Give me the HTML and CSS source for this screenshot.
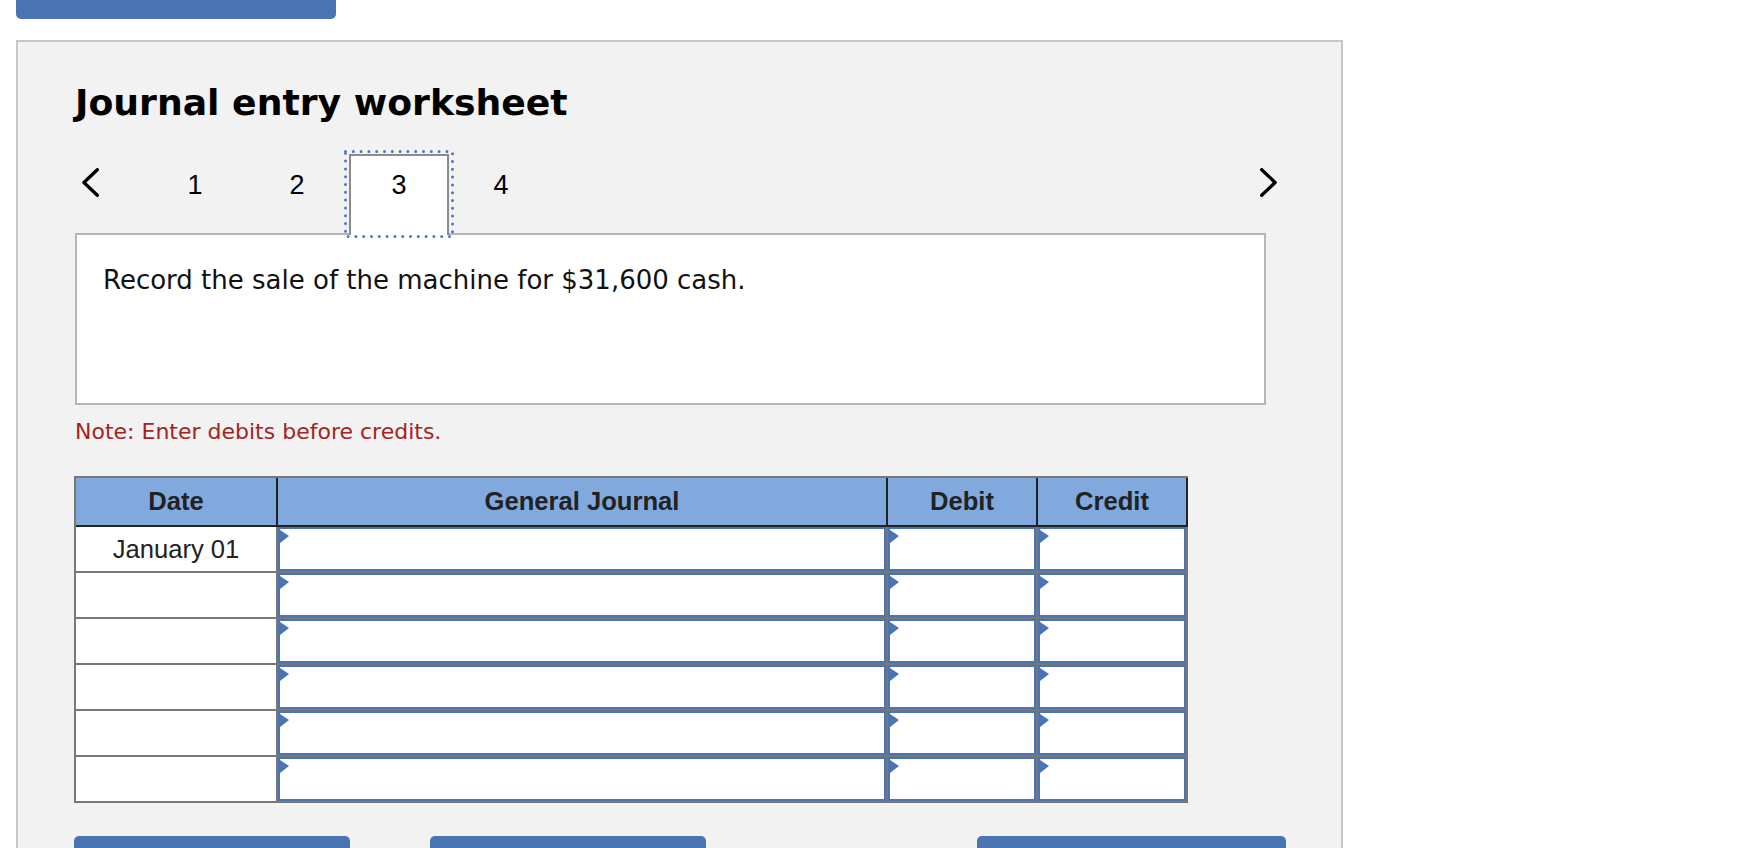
FILE: index.html
```html
<!DOCTYPE html>
<html lang="en">
<head>
<meta charset="utf-8">
<title>Journal entry worksheet</title>
<link rel="stylesheet" href="styles.css">
</head>
<body>
<div class="top-btn"></div>
<div class="panel">
  <h1 class="title">Journal entry worksheet</h1>
  <div class="nav">
    <svg class="chev" width="17" height="29" viewBox="0 0 17 29"><polyline points="15.3,1.7 1.9,14.5 15.3,27.3" fill="none" stroke="#000" stroke-width="3.3" stroke-linecap="round" stroke-linejoin="round"/></svg>
    <div class="steps">
      <div class="step">1</div>
      <div class="step">2</div>
      <div class="step active">3
        <svg class="focus-ring" width="110" height="88" viewBox="0 0 110 88"><rect x="1.5" y="1.5" width="107" height="85" fill="none" stroke="#4a78c4" stroke-width="3" stroke-linecap="round" stroke-dasharray="0 7.8"/></svg>
      </div>
      <div class="step">4</div>
    </div>
    <svg class="chev chev-right" width="17" height="29" viewBox="0 0 17 29"><polyline points="1.7,1.7 15.1,14.5 1.7,27.3" fill="none" stroke="#000" stroke-width="3.3" stroke-linecap="round" stroke-linejoin="round"/></svg>
  </div>
  <div class="prompt">Record the sale of the machine for $31,600 cash.</div>
  <p class="note">Note: Enter debits before credits.</p>
  <div class="journal">
    <div class="jhead">
      <div class="hcell">Date</div>
      <div class="hcell">General Journal</div>
      <div class="hcell">Debit</div>
      <div class="hcell">Credit</div>
    </div>
    <div class="jbody">
      <div class="dcell">January 01</div><div class="entry"></div><div class="entry"></div><div class="entry"></div>
      <div class="dcell"></div><div class="entry"></div><div class="entry"></div><div class="entry"></div>
      <div class="dcell"></div><div class="entry"></div><div class="entry"></div><div class="entry"></div>
      <div class="dcell"></div><div class="entry"></div><div class="entry"></div><div class="entry"></div>
      <div class="dcell"></div><div class="entry"></div><div class="entry"></div><div class="entry"></div>
      <div class="dcell"></div><div class="entry"></div><div class="entry"></div><div class="entry"></div>
    </div>
  </div>
  <div class="buttons">
    <div class="btn btn-1"></div>
    <div class="btn btn-2"></div>
    <div class="btn btn-3"></div>
  </div>
</div>
</body>
</html>
```

FILE: styles.css
```css
html, body {
  margin: 0;
  padding: 0;
  height: 100%;
  overflow: hidden;
  background: #ffffff;
}

body {
  font-family: "DejaVu Sans", Verdana, sans-serif;
  color: #000;
}

.top-btn {
  margin-left: 16px;
  width: 320px;
  height: 19px;
  background: #4a74b2;
  border-radius: 0 0 5px 5px;
}

.panel {
  margin-top: 21px;
  margin-left: 16px;
  width: 1327px;
  height: 808px;
  box-sizing: border-box;
  border: 2px solid #c6c6c6;
  border-bottom: 0;
  background: #f2f2f2;
  padding-top: 39px;
  overflow: hidden;
}

.title {
  margin: 0 0 0 57px;
  font-family: "DejaVu Sans", Verdana, sans-serif;
  font-weight: bold;
  font-size: 36.2px;
  line-height: 44px;
  color: #000;
}

.nav {
  margin-top: 29px;
  margin-left: 64px;
  width: 1195px;
  height: 79px;
  display: flex;
  align-items: flex-start;
}

.chev {
  margin-top: 14px;
  flex: none;
}

.chev-right {
  margin-left: auto;
}

.steps {
  margin-left: 46px;
  display: flex;
  gap: 2px;
  align-items: flex-start;
}

.step {
  width: 100px;
  height: 79px;
  box-sizing: border-box;
  border: 2px solid transparent;
  border-bottom: 0;
  padding-top: 14px;
  text-align: center;
  font-family: "Liberation Sans", Arial, sans-serif;
  font-size: 27px;
  line-height: 30px;
  color: #000;
}

.step.active {
  position: relative;
  z-index: 1;
  height: 81px;
  margin-bottom: -2px;
  background: #fff;
  border-color: #8a8a8a;
}

.focus-ring {
  position: absolute;
  left: -7px;
  top: -6px;
}

.prompt {
  margin-left: 57px;
  width: 1191px;
  height: 172px;
  box-sizing: border-box;
  border: 2px solid #b6b6b6;
  background: #fff;
  padding: 29px 26px 0;
  font-size: 26px;
  line-height: 32px;
  color: #111;
}

.note {
  margin: 14px 0 0 57px;
  font-size: 22px;
  line-height: 26px;
  color: #a3231f;
}

.journal {
  margin-top: 31px;
  margin-left: 56px;
  width: 1114px;
  font-family: "Liberation Sans", Arial, sans-serif;
  font-size: 25.6px;
  color: #222;
}

.jhead {
  display: grid;
  grid-template-columns: 200px 608px 148px 148px;
  gap: 2px;
  background: #222;
  border-top: 2px solid #777;
  border-left: 2px solid #777;
  padding: 0 2px 2px 0;
}

.hcell {
  height: 47px;
  background: #81a9de;
  display: flex;
  align-items: center;
  justify-content: center;
  font-weight: bold;
}

.jbody {
  display: grid;
  grid-template-columns: 200px 608px 148px 148px;
  grid-auto-rows: 44px;
  gap: 2px;
  background: #777;
  padding: 0 2px 2px 2px;
}

.dcell {
  background: #fff;
  display: flex;
  align-items: center;
  justify-content: center;
}

.entry {
  position: relative;
  background: #fff;
  border: 2px solid #4a74b2;
}

.entry::before {
  content: "";
  position: absolute;
  left: 0;
  top: 1px;
  width: 0;
  height: 0;
  border-left: 9px solid #4a74b2;
  border-top: 6px solid transparent;
  border-bottom: 7px solid transparent;
}

.buttons {
  margin-top: 33px;
  display: flex;
}

.btn {
  height: 12px;
  background: #4a74b2;
  border-radius: 5px 5px 0 0;
}

.btn-1 {
  margin-left: 56px;
  width: 276px;
}

.btn-2 {
  margin-left: 80px;
  width: 276px;
}

.btn-3 {
  margin-left: 271px;
  width: 309px;
}
```
